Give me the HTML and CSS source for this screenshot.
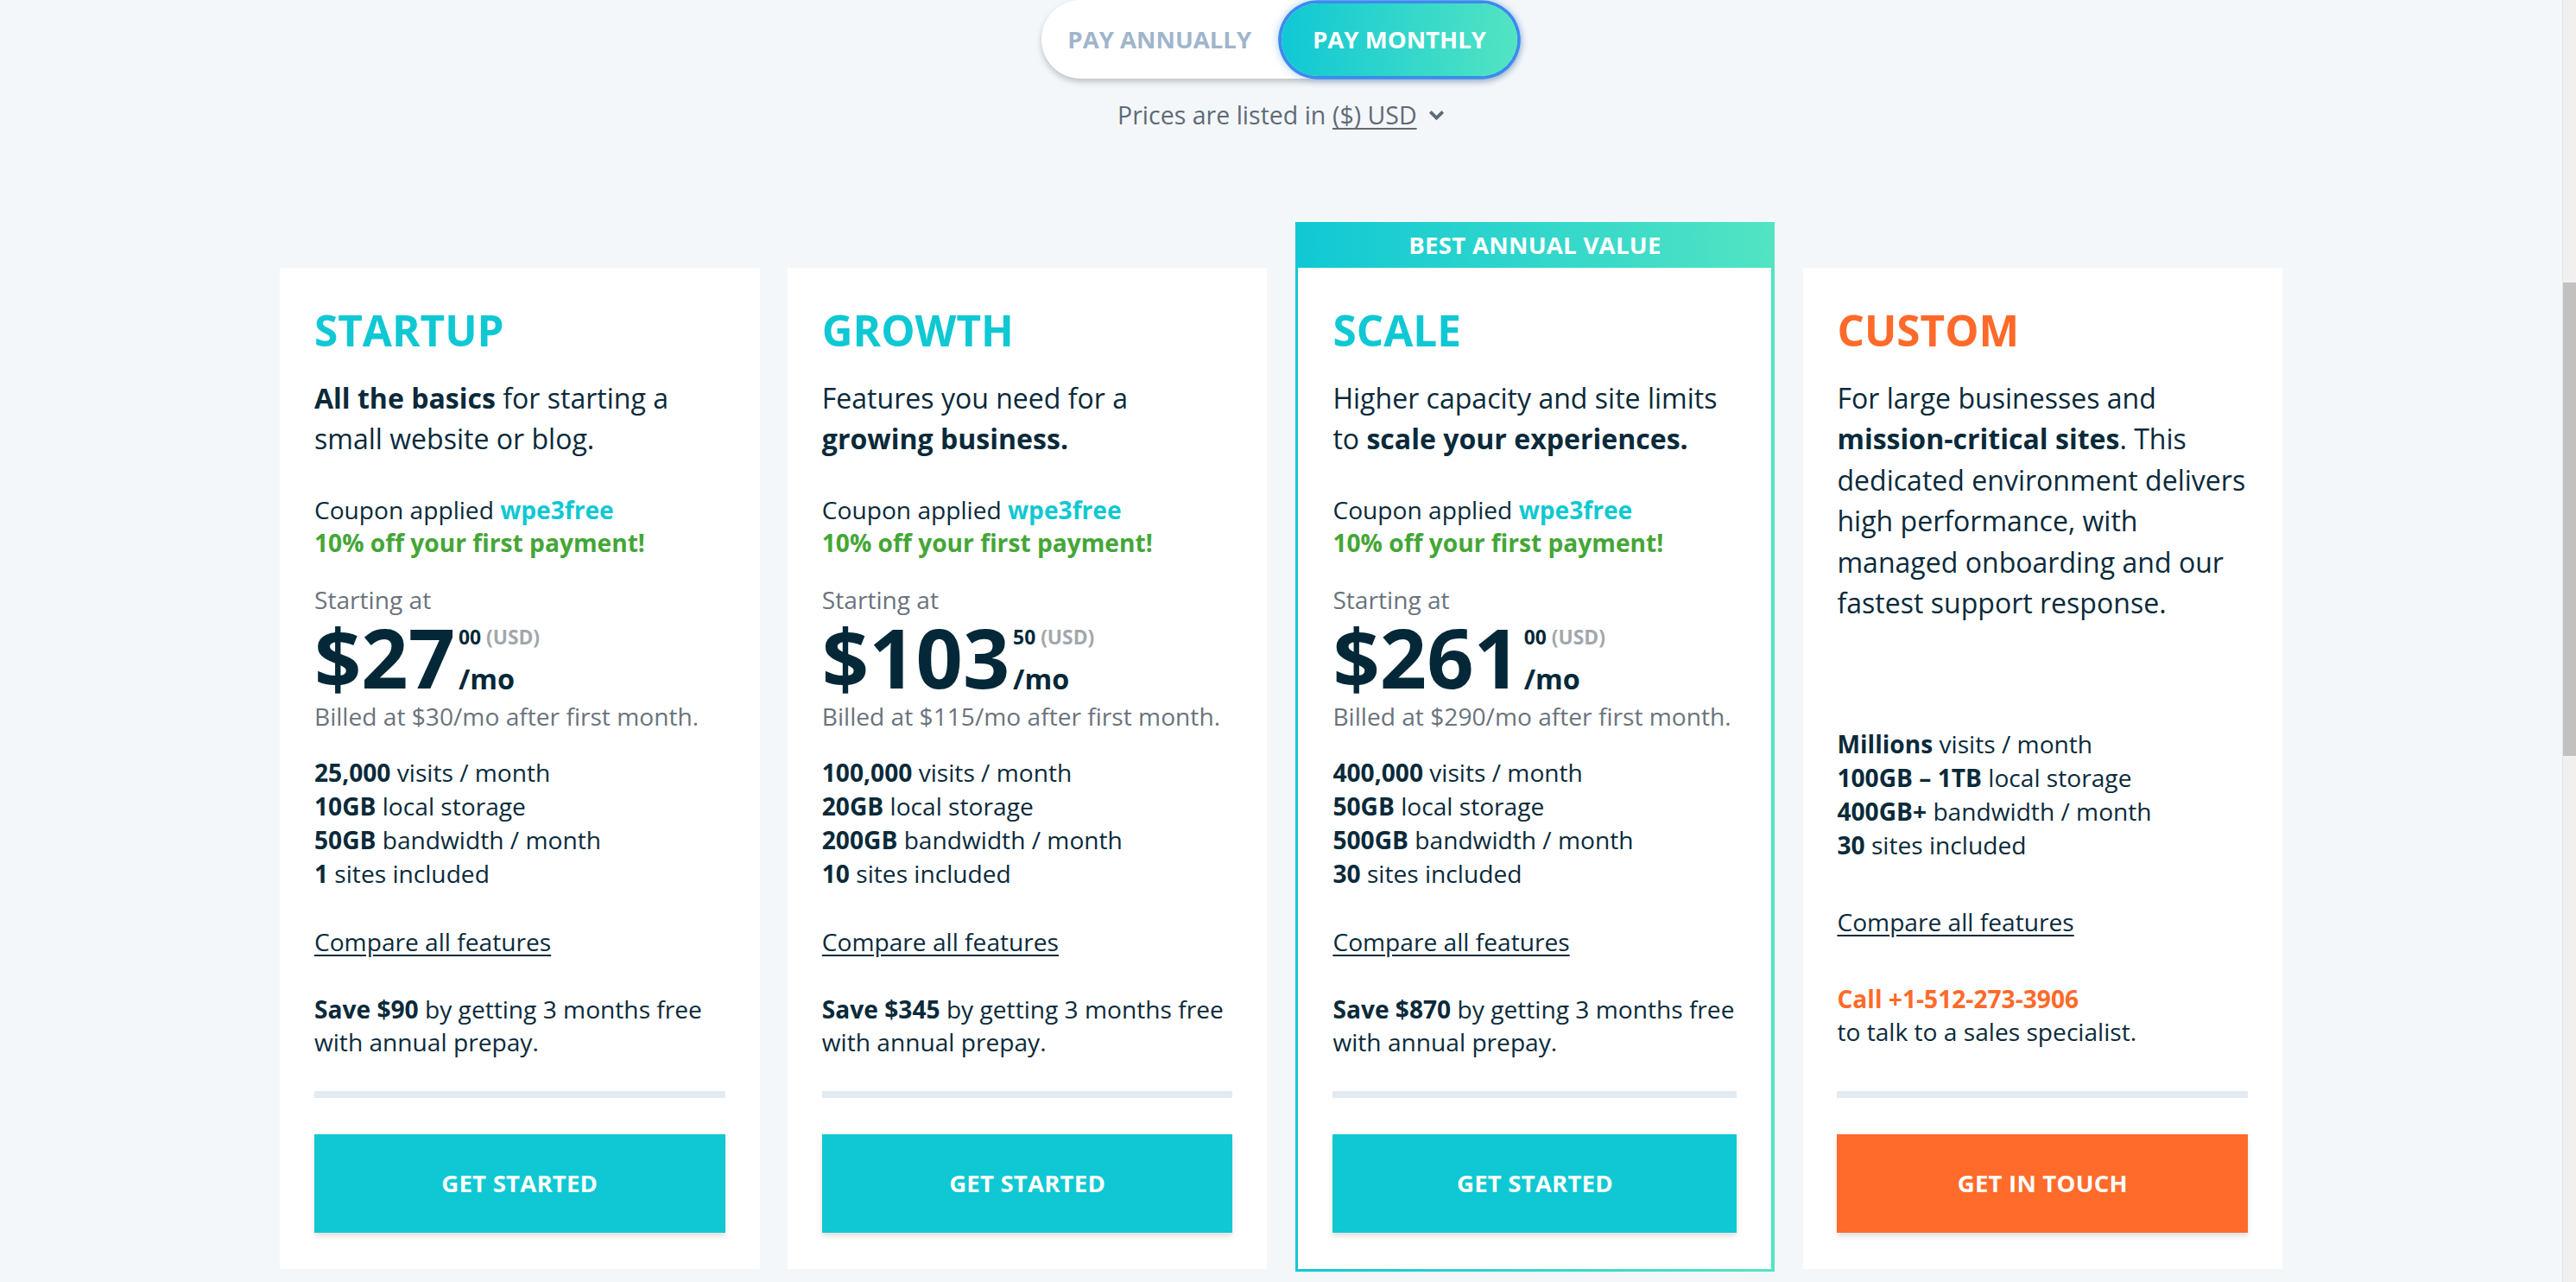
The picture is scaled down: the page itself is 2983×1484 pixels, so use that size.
FILE: index.html
```html
<!DOCTYPE html>
<html lang="en">
<head>
<meta charset="utf-8">
<title>Pricing</title>
<link rel="stylesheet" href="styles.css">
</head>
<body>
<div class="viewport">
  <main class="page">
    <div class="toggle">
      <button class="toggle__opt">PAY ANNUALLY</button>
      <button class="toggle__opt toggle__opt--active">PAY MONTHLY</button>
    </div>
    <p class="currency">Prices are listed in <span class="currency__link">($) USD</span><svg class="currency__chev" width="10" height="7" viewBox="0 0 10 7"><polyline points="1.2,1.2 5,5 8.8,1.2" fill="none" stroke="#5f6b76" stroke-width="2"/></svg></p>

    <section class="plans">
      <article class="card">
        <div class="card__body">
          <h2 class="card__title">STARTUP</h2>
          <p class="card__desc"><b>All the basics</b> for starting a<br>small website or blog.</p>
          <p class="card__coupon">Coupon applied <b class="teal">wpe3free</b><br><b class="green">10% off your first payment!</b></p>
          <p class="card__start">Starting at</p>
          <div class="price"><span class="price__amount">$27</span><span class="price__side"><span class="price__cents">00 <span class="price__cur">(USD)</span></span><span class="price__per">/mo</span></span></div>
          <p class="card__billed">Billed at $30/mo after first month.</p>
          <ul class="card__features">
            <li><b>25,000</b> visits / month</li>
            <li><b>10GB</b> local storage</li>
            <li><b>50GB</b> bandwidth / month</li>
            <li><b>1</b> sites included</li>
          </ul>
          <a class="card__compare" href="#">Compare all features</a>
          <p class="card__save"><b>Save $90</b> by getting 3 months free<br>with annual prepay.</p>
          <hr class="card__rule">
          <a class="btn" href="#">GET STARTED</a>
        </div>
      </article>

      <article class="card">
        <div class="card__body">
          <h2 class="card__title">GROWTH</h2>
          <p class="card__desc">Features you need for a<br><b>growing business.</b></p>
          <p class="card__coupon">Coupon applied <b class="teal">wpe3free</b><br><b class="green">10% off your first payment!</b></p>
          <p class="card__start">Starting at</p>
          <div class="price"><span class="price__amount">$103</span><span class="price__side"><span class="price__cents">50 <span class="price__cur">(USD)</span></span><span class="price__per">/mo</span></span></div>
          <p class="card__billed">Billed at $115/mo after first month.</p>
          <ul class="card__features">
            <li><b>100,000</b> visits / month</li>
            <li><b>20GB</b> local storage</li>
            <li><b>200GB</b> bandwidth / month</li>
            <li><b>10</b> sites included</li>
          </ul>
          <a class="card__compare" href="#">Compare all features</a>
          <p class="card__save"><b>Save $345</b> by getting 3 months free<br>with annual prepay.</p>
          <hr class="card__rule">
          <a class="btn" href="#">GET STARTED</a>
        </div>
      </article>

      <article class="card card--featured">
        <div class="card__badge">BEST ANNUAL VALUE</div>
        <div class="card__body">
          <h2 class="card__title">SCALE</h2>
          <p class="card__desc">Higher capacity and site limits<br>to <b>scale your experiences.</b></p>
          <p class="card__coupon">Coupon applied <b class="teal">wpe3free</b><br><b class="green">10% off your first payment!</b></p>
          <p class="card__start">Starting at</p>
          <div class="price"><span class="price__amount">$261</span><span class="price__side"><span class="price__cents">00 <span class="price__cur">(USD)</span></span><span class="price__per">/mo</span></span></div>
          <p class="card__billed">Billed at $290/mo after first month.</p>
          <ul class="card__features">
            <li><b>400,000</b> visits / month</li>
            <li><b>50GB</b> local storage</li>
            <li><b>500GB</b> bandwidth / month</li>
            <li><b>30</b> sites included</li>
          </ul>
          <a class="card__compare" href="#">Compare all features</a>
          <p class="card__save"><b>Save $870</b> by getting 3 months free<br>with annual prepay.</p>
          <hr class="card__rule">
          <a class="btn" href="#">GET STARTED</a>
        </div>
      </article>

      <article class="card card--custom">
        <div class="card__body">
          <h2 class="card__title">CUSTOM</h2>
          <p class="card__desc">For large businesses and<br><b>mission-critical sites</b>. This<br>dedicated environment delivers<br>high performance, with<br>managed onboarding and our<br>fastest support response.</p>
          <ul class="card__features">
            <li><b>Millions</b> visits / month</li>
            <li><b>100GB – 1TB</b> local storage</li>
            <li><b>400GB+</b> bandwidth / month</li>
            <li><b>30</b> sites included</li>
          </ul>
          <a class="card__compare" href="#">Compare all features</a>
          <p class="card__call"><b class="orange">Call +1-512-273-3906</b><br>to talk to a sales specialist.</p>
          <hr class="card__rule">
          <a class="btn btn--orange" href="#">GET IN TOUCH</a>
        </div>
      </article>
    </section>
  </main>
  <div class="scrollbar"><div class="scrollbar__thumb"></div></div>
</div>
</body>
</html>
```

FILE: styles.css
```css
* { box-sizing: border-box; }

html, body {
  margin: 0;
  padding: 0;
}

body {
  zoom: 1.9024;
  background: #f4f7fa;
  font-family: "Open Sans", "Noto Sans", "Liberation Sans", sans-serif;
  color: #0a2a3a;
}

.viewport {
  display: flex;
  height: 780px;
  overflow: hidden;
}

.page {
  flex: 1;
  display: flex;
  flex-direction: column;
  align-items: center;
}

/* scrollbar column at the right edge */
.scrollbar {
  width: 8.4px;
  background: #f0f0f0;
  border-left: 0.5px solid #e4e4e4;
  padding-top: 172px;
}
.scrollbar__thumb {
  height: 288px;
  background: #c1c1c1;
}

/* billing toggle */
.toggle {
  display: flex;
  width: 292px;
  height: 48px;
  background: #fff;
  border-radius: 24px;
  box-shadow: 0 2px 4px rgba(0, 0, 0, 0.22);
}
.toggle__opt {
  flex: 1;
  border: 0;
  padding: 0;
  background: none;
  border-radius: 24px;
  font: 700 14.5px/1 "Open Sans", "Noto Sans", sans-serif;
  color: #a0b5cb;
  cursor: pointer;
}
.toggle__opt--active {
  margin: 2px;
  color: #fff;
  background: linear-gradient(90deg, #10c8d4, #52e4c2);
  box-shadow: 0 0 0 2px #3b8cec, 0 0 5px 2px rgba(59, 140, 236, 0.45);
}

.currency {
  margin: 12px 0 0;
  font-size: 15px;
  line-height: 20px;
  color: #5f6b76;
  display: flex;
  align-items: center;
}
.currency__link {
  margin-left: 4px;
  text-decoration: underline;
  text-underline-offset: 2px;
}
.currency__chev {
  margin-left: 7px;
}

/* plans grid */
.plans {
  margin-top: 55px;
  display: grid;
  grid-template-columns: repeat(4, 292px);
  column-gap: 17px;
}

.card {
  margin-top: 28px;
  background: #fff;
  display: flex;
  flex-direction: column;
}
.card--featured {
  margin-top: 0;
  margin-bottom: -2px;
  padding: 0 2px 2px;
  background: linear-gradient(90deg, #10c8d4, #52e4c2);
}
.card__badge {
  height: 28px;
  line-height: 28px;
  text-align: center;
  color: #fff;
  font-weight: 700;
  font-size: 14.5px;
  letter-spacing: 0.15px;
}
.card__body {
  flex: 1;
  min-height: 609px;
  background: #fff;
  padding: 22px 21px;
  display: flex;
  flex-direction: column;
}

.card__title {
  margin: 0;
  font-size: 26px;
  line-height: 32px;
  font-weight: 700;
  color: #0fc8d3;
}
.card--custom .card__title { color: #ff6a2a; }

.card__desc {
  margin: 12.5px 0 0;
  font-size: 16.85px;
  line-height: 25px;
  white-space: nowrap;
}

.card__coupon {
  margin: 20.5px 0 0;
  font-size: 14.8px;
  line-height: 20px;
}
.teal { color: #0fc8d3; }
.green { color: #44a636; }
.orange { color: #ff6a2a; }

.card__start {
  margin: 15px 0 0;
  font-size: 14.8px;
  line-height: 20px;
  color: #6a737c;
}

.price {
  display: flex;
  align-items: flex-start;
  height: 51px;
  color: #042838;
}
.price__amount {
  font-size: 50px;
  line-height: 50px;
  font-weight: 700;
}
.price__side {
  display: flex;
  flex-direction: column;
  margin-left: 2px;
}
.price__cents {
  margin-top: 6px;
  font-size: 12px;
  line-height: 14px;
  font-weight: 700;
}
.price__cur { color: #a1a7ac; }
.price__per {
  margin-top: 7px;
  font-size: 17px;
  line-height: 22px;
  font-weight: 700;
}

.card__billed {
  margin: 0;
  font-size: 14.8px;
  line-height: 20px;
  color: #6a737c;
}

.card__features {
  list-style: none;
  margin: 13.75px 0 0;
  padding: 0;
  font-size: 14.8px;
  line-height: 20.6px;
}
.card--custom .card__features { margin-top: 63px; }

.card__compare {
  align-self: flex-start;
  margin-top: 21px;
  font-size: 14.8px;
  line-height: 20px;
  color: #0a2a3a;
  text-decoration: underline;
  text-underline-offset: 2px;
}
.card--custom .card__compare { margin-top: 26px; }

.card__save,
.card__call {
  margin: 21px 0 0;
  font-size: 14.8px;
  line-height: 20px;
  white-space: nowrap;
}
.card__call { margin-top: 27px; }

.card__rule {
  margin: auto 0 0;
  border: 0;
  height: 4px;
  background: #e3eaf0;
}

.btn {
  margin-top: 22px;
  height: 60px;
  display: flex;
  align-items: center;
  justify-content: center;
  background: #0fc8d3;
  color: #fff;
  font-size: 14.5px;
  font-weight: 700;
  letter-spacing: 0.1px;
  text-decoration: none;
  box-shadow: 0 2px 3px rgba(0, 0, 0, 0.12);
}
.btn--orange { background: #ff6b2b; }
```
